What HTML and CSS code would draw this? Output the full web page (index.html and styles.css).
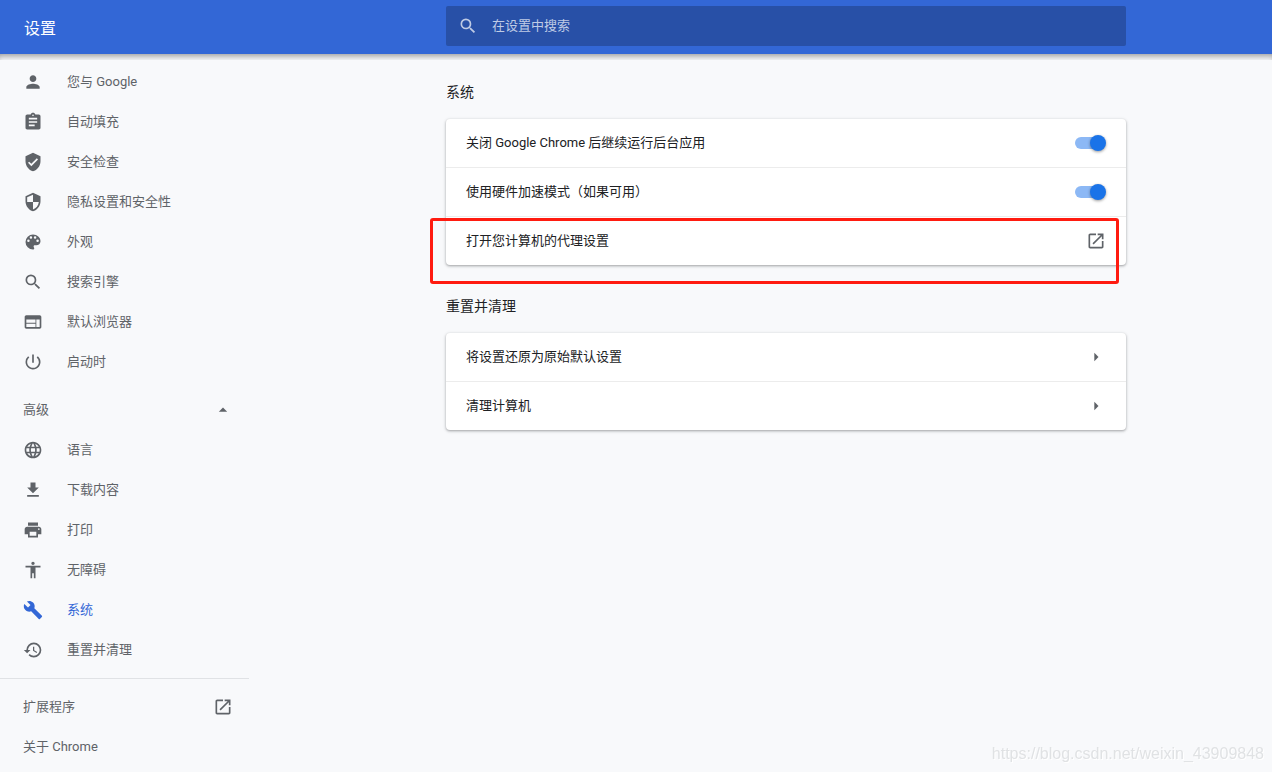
FILE: index.html
```html
<!DOCTYPE html>
<html lang="zh-CN">
<head>
<meta charset="utf-8">
<meta name="viewport" content="width=device-width, initial-scale=1">
<title>设置</title>
<link rel="stylesheet" href="styles.css">
</head>
<body>
<header class="toolbar">
  <h1 class="toolbar-title">设置</h1>
  <div class="toolbar-center">
    <label class="search">
      <svg class="icon" viewBox="0 0 24 24" aria-hidden="true"><path d="M15.5 14h-.79l-.28-.27A6.471 6.471 0 0 0 16 9.5 6.5 6.5 0 1 0 9.5 16c1.61 0 3.09-.59 4.23-1.57l.27.28v.79l5 4.99L20.49 19l-4.99-5zm-6 0C7.01 14 5 11.99 5 9.5S7.01 5 9.5 5 14 7.01 14 9.5 11.99 14 9.5 14z"/></svg>
      <input class="search-input" type="search" placeholder="在设置中搜索" aria-label="在设置中搜索">
    </label>
  </div>
</header>
<div class="layout">
  <nav class="sidebar">
    <div class="menu">
      <a class="menu-item" href="#people"><svg class="icon" viewBox="0 0 24 24"><path d="M12 12c2.21 0 4-1.79 4-4s-1.79-4-4-4-4 1.79-4 4 1.79 4 4 4zm0 2c-2.67 0-8 1.34-8 4v2h16v-2c0-2.66-5.33-4-8-4z"/></svg><span class="label">您与 Google</span></a>
      <a class="menu-item" href="#autofill"><svg class="icon" viewBox="0 0 24 24"><path d="M19 3h-4.18C14.4 1.84 13.3 1 12 1c-1.3 0-2.4.84-2.82 2H5c-1.1 0-2 .9-2 2v14c0 1.100.9 2 2 2h14c1.100 0 2-.9 2-2V5c0-1.100-.9-2-2-2zm-7 0c.55 0 1 .45 1 1s-.45 1-1 1-1-.45-1-1 .45-1 1-1zm2 14H7v-2h7v2zm3-4H7v-2h10v2zm0-4H7V7h10v2z"/></svg><span class="label">自动填充</span></a>
      <a class="menu-item" href="#safety"><svg class="icon" viewBox="0 0 24 24"><path d="M12 1L3 5v6c0 5.550 3.840 10.740 9 12 5.160-1.260 9-6.450 9-12V5l-9-4zm-2 16l-4-4 1.410-1.410L10 14.170l6.590-6.590L18 9l-8 8z"/></svg><span class="label">安全检查</span></a>
      <a class="menu-item" href="#privacy"><svg class="icon" viewBox="0 0 24 24"><path d="M12 1L3 5v6c0 5.550 3.840 10.740 9 12 5.160-1.260 9-6.450 9-12V5l-9-4zm0 10.990h7c-.53 4.120-3.280 7.790-7 8.940V12H5V6.300l7-3.110v8.800z"/></svg><span class="label">隐私设置和安全性</span></a>
      <a class="menu-item" href="#appearance"><svg class="icon" viewBox="0 0 24 24"><path d="M12 3a9 9 0 0 0 0 18c.83 0 1.500-.67 1.500-1.500 0-.39-.15-.74-.39-1.010-.23-.26-.38-.61-.38-.99 0-.83.67-1.500 1.500-1.500H16c2.760 0 5-2.240 5-5 0-4.420-4.030-8-9-8zm-5.500 9a1.500 1.500 0 1 1 0-3 1.500 1.500 0 0 1 0 3zm3-4a1.500 1.500 0 1 1 0-3 1.500 1.500 0 0 1 0 3zm5 0a1.500 1.500 0 1 1 0-3 1.500 1.500 0 0 1 0 3zm3 4a1.500 1.500 0 1 1 0-3 1.500 1.500 0 0 1 0 3z"/></svg><span class="label">外观</span></a>
      <a class="menu-item" href="#search"><svg class="icon" viewBox="0 0 24 24"><path d="M15.500 14h-.79l-.28-.27A6.471 6.471 0 0 0 16 9.500 6.500 6.500 0 1 0 9.500 16c1.610 0 3.090-.59 4.230-1.570l.27.28v.79l5 4.990L20.490 19l-4.990-5zm-6 0C7.010 14 5 11.990 5 9.500S7.010 5 9.500 5 14 7.010 14 9.500 11.990 14 9.500 14z"/></svg><span class="label">搜索引擎</span></a>
      <a class="menu-item" href="#default-browser"><svg class="icon" viewBox="0 0 24 24"><path d="M20 4H4c-1.100 0-1.990.9-1.990 2L2 18c0 1.100.9 2 2 2h16c1.100 0 2-.9 2-2V6c0-1.100-.9-2-2-2zm-5 14H4v-4h11v4zm0-5H4V9h11v4zm5 5h-4V9h4v9z"/></svg><span class="label">默认浏览器</span></a>
      <a class="menu-item" href="#startup"><svg class="icon" viewBox="0 0 24 24"><path d="M13 3h-2v10h2V3zm4.830 2.170l-1.420 1.420A6.920 6.920 0 0 1 19 12a7 7 0 1 1-11.420-5.420L6.170 5.170A8.932 8.932 0 0 0 3 12a9 9 0 1 0 14.830-6.830z"/></svg><span class="label">启动时</span></a>
    </div>
    <button class="menu-toggle" type="button" aria-expanded="true"><span class="label">高级</span><svg class="icon" viewBox="0 0 24 24"><path d="M7 14l5-5 5 5z"/></svg></button>
    <div class="menu">
      <a class="menu-item" href="#languages"><svg class="icon" viewBox="0 0 24 24"><path d="M11.990 2C6.470 2 2 6.480 2 12s4.470 10 9.990 10C17.520 22 22 17.520 22 12S17.520 2 11.990 2zm6.930 6h-2.950a15.650 15.650 0 0 0-1.380-3.560A8.030 8.030 0 0 1 18.920 8zM12 4.040c.83 1.200 1.480 2.530 1.910 3.960h-3.820c.43-1.430 1.080-2.760 1.910-3.960zM4.260 14C4.100 13.360 4 12.690 4 12s.1-1.360.26-2h3.380c-.08.66-.14 1.320-.14 2s.06 1.340.14 2H4.260zm.82 2h2.950c.32 1.250.78 2.450 1.380 3.560A7.987 7.987 0 0 1 5.080 16zm2.950-8H5.080a7.987 7.987 0 0 1 4.330-3.560A15.650 15.650 0 0 0 8.030 8zM12 19.960c-.83-1.200-1.480-2.530-1.910-3.960h3.820c-.43 1.430-1.080 2.760-1.910 3.960zM14.340 14H9.660c-.09-.66-.16-1.320-.16-2s.07-1.350.16-2h4.680c.09.65.16 1.320.16 2s-.07 1.340-.16 2zm.25 5.560c.6-1.110 1.060-2.310 1.380-3.560h2.950a8.030 8.030 0 0 1-4.330 3.560zM16.360 14c.08-.66.14-1.320.14-2s-.06-1.340-.14-2h3.380c.16.64.26 1.310.26 2s-.1 1.360-.26 2h-3.380z"/></svg><span class="label">语言</span></a>
      <a class="menu-item" href="#downloads"><svg class="icon" viewBox="0 0 24 24"><path d="M19 9h-4V3H9v6H5l7 7 7-7zM5 18v2h14v-2H5z"/></svg><span class="label">下载内容</span></a>
      <a class="menu-item" href="#printing"><svg class="icon" viewBox="0 0 24 24"><path d="M19 8H5c-1.660 0-3 1.340-3 3v6h4v4h12v-4h4v-6c0-1.660-1.340-3-3-3zm-3 11H8v-5h8v5zm3-7c-.55 0-1-.45-1-1s.45-1 1-1 1 .45 1 1-.45 1-1 1zm-1-9H6v4h12V3z"/></svg><span class="label">打印</span></a>
      <a class="menu-item" href="#accessibility"><svg class="icon" viewBox="0 0 24 24"><path d="M12 2c1.100 0 2 .9 2 2s-.9 2-2 2-2-.9-2-2 .9-2 2-2zm9 7h-6v13h-2v-6h-2v6H9V9H3V7h18v2z"/></svg><span class="label">无障碍</span></a>
      <a class="menu-item menu-item-active" href="#system" aria-current="page"><svg class="icon" viewBox="0 0 24 24"><path d="M22.700 19l-9.100-9.100c.9-2.300.4-5-1.500-6.900-2-2-5-2.400-7.400-1.300L9 6 6 9 1.600 4.700C.4 7.100.9 10.100 2.900 12.100c1.900 1.900 4.600 2.400 6.900 1.500l9.100 9.100c.4.4 1 .4 1.400 0l2.300-2.300c.5-.4.5-1.100.1-1.400z"/></svg><span class="label">系统</span></a>
      <a class="menu-item" href="#reset"><svg class="icon" viewBox="0 0 24 24"><path d="M13 3a9 9 0 0 0-9 9H1l3.890 3.890.07.14L9 12H6a7 7 0 1 1 7 7c-1.930 0-3.680-.79-4.940-2.060l-1.420 1.420A8.954 8.954 0 0 0 13 21a9 9 0 0 0 0-18zm-1 5v5l4.280 2.540.72-1.210-3.500-2.080V8H12z"/></svg><span class="label">重置并清理</span></a>
    </div>
    <hr class="separator">
    <a class="menu-link" href="#extensions"><span class="label">扩展程序</span><svg class="icon" viewBox="0 0 24 24"><path d="M19 19H5V5h7V3H5c-1.110 0-2 .9-2 2v14c0 1.100.89 2 2 2h14c1.100 0 2-.9 2-2v-7h-2v7zM14 3v2h3.590l-9.830 9.830 1.410 1.410L19 6.410V10h2V3h-7z"/></svg></a>
    <a class="menu-link" href="#about"><span class="label">关于 Chrome</span></a>
  </nav>
  <main class="content">
    <section class="section">
      <h2 class="section-title">系统</h2>
      <div class="card">
        <label class="row"><span class="label">关闭 Google Chrome 后继续运行后台应用</span><input class="switch" type="checkbox" checked></label>
        <label class="row"><span class="label">使用硬件加速模式（如果可用）</span><input class="switch" type="checkbox" checked></label>
        <div class="row-marked">
          <button class="row" type="button"><span class="label">打开您计算机的代理设置</span><svg class="icon" viewBox="0 0 24 24"><path d="M19 19H5V5h7V3H5c-1.110 0-2 .9-2 2v14c0 1.100.89 2 2 2h14c1.100 0 2-.9 2-2v-7h-2v7zM14 3v2h3.590l-9.830 9.830 1.410 1.410L19 6.410V10h2V3h-7z"/></svg></button>
          <span class="marker" aria-hidden="true"></span>
        </div>
      </div>
    </section>
    <section class="section">
      <h2 class="section-title">重置并清理</h2>
      <div class="card">
        <button class="row" type="button"><span class="label">将设置还原为原始默认设置</span><svg class="icon" viewBox="0 0 24 24"><path d="M10 7l5 5-5 5z"/></svg></button>
        <button class="row" type="button"><span class="label">清理计算机</span><svg class="icon" viewBox="0 0 24 24"><path d="M10 7l5 5-5 5z"/></svg></button>
      </div>
    </section>
  </main>
</div>
<div class="watermark">https://blog.csdn.net/weixin_43909848</div>
</body>
</html>
```

FILE: styles.css
```css
* {
  box-sizing: border-box;
}

body {
  margin: 0;
  min-height: 100vh;
  background: #f8f9fb;
  color: #202124;
  font: 13px/20px Roboto, "Noto Sans CJK SC", sans-serif;
}

button,
input {
  border: 0;
  background: none;
  font: inherit;
  color: inherit;
}

.icon {
  flex: none;
  width: 20px;
  height: 20px;
  fill: #5f6368;
}

.toolbar {
  position: relative;
  display: flex;
  height: 54px;
  background: #3367d6;
  color: #fff;
}

.toolbar::after {
  content: "";
  position: absolute;
  top: 100%;
  left: 0;
  right: 0;
  height: 6px;
  box-shadow: inset 0 5px 6px -3px rgba(0, 0, 0, 0.4);
}

.toolbar-title {
  flex: 0 0 300px;
  margin: 0;
  padding: 17px 24px 0;
  font-size: 16px;
  font-weight: 400;
  line-height: 24px;
}

.toolbar-center {
  flex: 1;
  padding-top: 6px;
}

.search {
  display: flex;
  align-items: center;
  gap: 14px;
  max-width: 680px;
  height: 40px;
  margin: 0 auto;
  padding: 0 12px;
  border-radius: 2px;
  background: #2850a7;
}

.search .icon {
  fill: #bfcbe5;
}

.search-input {
  flex: 1;
  min-width: 0;
  padding: 0;
  outline: 0;
}

.search-input::placeholder {
  color: #bfcbe5;
}

.layout {
  display: flex;
}

.sidebar {
  flex: 0 0 300px;
  padding-top: 8px;
  padding-right: 51px;
  color: #5f6368;
}

.menu-item,
.menu-link,
.menu-toggle {
  display: flex;
  align-items: center;
  width: 100%;
  height: 40px;
  padding: 0 16px 0 23px;
  color: inherit;
  text-decoration: none;
}

.menu-item {
  gap: 24px;
}

.menu-link,
.menu-toggle {
  justify-content: space-between;
}

.menu-toggle {
  margin-top: 8px;
}

.menu-item-active {
  color: #3367d6;
}

.menu-item-active .icon {
  fill: #3367d6;
}

.separator {
  height: 1px;
  margin: 8px 0;
  border: 0;
  background: #e0e2e5;
}

.content {
  flex: 1;
  padding-top: 28px;
}

.section {
  max-width: 680px;
  margin: 0 auto 31px;
}

.section-title {
  margin: 0 0 17px;
  font-size: 14px;
  font-weight: 400;
  line-height: 20px;
}

.card {
  border-radius: 4px;
  background: #fff;
  box-shadow: 0 1px 2px rgba(60, 64, 67, 0.3), 0 1px 3px 1px rgba(60, 64, 67, 0.15);
}

.card > * + * {
  border-top: 1px solid #ececec;
}

.row {
  display: flex;
  align-items: center;
  justify-content: space-between;
  width: 100%;
  padding: 14px 20px;
  text-align: left;
}

.row-marked {
  position: relative;
}

.marker {
  position: absolute;
  top: 1px;
  left: -16px;
  right: 7px;
  height: 66px;
  border: 3px solid #ff1b10;
  border-radius: 3px;
  pointer-events: none;
}

.switch {
  appearance: none;
  position: relative;
  flex: none;
  width: 31px;
  height: 16px;
  margin: 0;
}

.switch::before {
  content: "";
  position: absolute;
  top: 2px;
  left: 0;
  width: 28px;
  height: 12px;
  border-radius: 6px;
  background: #bdc1c6;
}

.switch::after {
  content: "";
  position: absolute;
  top: 0;
  left: 0;
  width: 16px;
  height: 16px;
  border-radius: 50%;
  background: #fff;
  box-shadow: 0 1px 3px rgba(0, 0, 0, 0.4);
}

.switch:checked::before {
  background: #8cb8f5;
}

.switch:checked::after {
  left: auto;
  right: 0;
  background: #1a73e8;
}

.watermark {
  position: fixed;
  right: 8px;
  bottom: 8px;
  color: #e0e2e4;
  font: 16px/20px "Liberation Sans", sans-serif;
  text-shadow: 1px 1px 0 #fff;
  pointer-events: none;
}
```
